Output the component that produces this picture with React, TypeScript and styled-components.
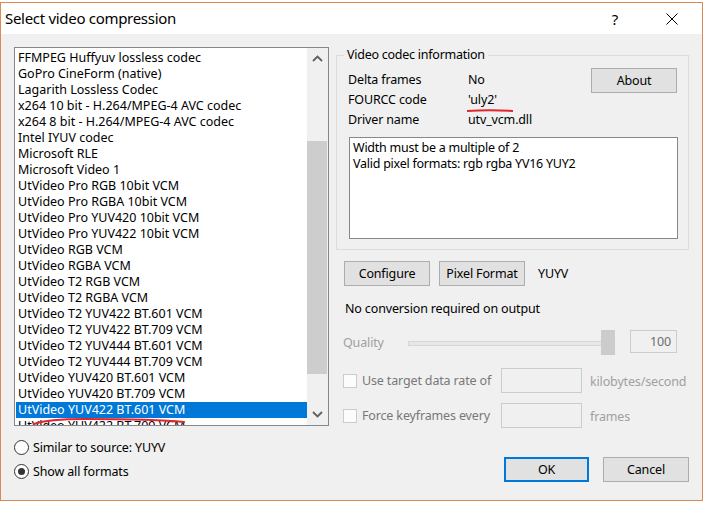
import React from "react";
import styled, { createGlobalStyle } from "styled-components";

const FONT = `"Noto Sans", "Open Sans", "Liberation Sans", sans-serif`;

const Global = createGlobalStyle`
  html, body { margin: 0; padding: 0; background: #ffffff; }
  body { font-family: ${FONT}; }
  * { box-sizing: border-box; }
`;

const Page = styled.div`
  width: 726px;
  height: 508px;
  padding-top: 2px;
`;

const Window = styled.div`
  width: 703px;
  height: 499px;
  border: 1px solid #d98a55;
  background: #f0f0f0;
  display: flex;
  flex-direction: column;
  font-family: ${FONT};
  font-size: 12px;
  color: #000;
  letter-spacing: -0.15px;
`;

const TitleBar = styled.div`
  height: 31px;
  flex: none;
  background: #ffffff;
  display: flex;
  align-items: center;
  padding: 0 7px 0 4px;
`;

const TitleText = styled.div`
  flex: 1;
  font-size: 15px;
  line-height: 20px;
  letter-spacing: -0.3px;
  margin-top: -1px;
`;

const TitleButton = styled.div<{ $gap?: number }>`
  width: 46px;
  height: 31px;
  display: flex;
  align-items: center;
  justify-content: center;
  font-size: 15px;
  margin-left: ${(p) => p.$gap ?? 0}px;
`;

const Body = styled.div`
  flex: 1;
  display: flex;
  gap: 7px;
  padding: 13px 13px 0 13px;
`;

const LeftCol = styled.div`
  width: 315px;
  display: flex;
  flex-direction: column;
`;

const ListBox = styled.div`
  position: relative;
  height: 379px;
  border: 1px solid #828790;
  background: #ffffff;
  display: flex;
  overflow: hidden;
`;

const Items = styled.div`
  width: 292px;
  padding: 2px 0 0 1px;
  overflow: hidden;
`;

const Item = styled.div<{ $selected?: boolean }>`
  height: 16px;
  line-height: 16px;
  padding-left: 2px;
  white-space: nowrap;
  font-size: 12.5px;
  letter-spacing: 0;
  background: ${(p) => (p.$selected ? "#0078d7" : "transparent")};
  color: ${(p) => (p.$selected ? "#ffffff" : "#000000")};
`;

const ScrollBar = styled.div`
  width: 21px;
  background: #f0f0f0;
  display: flex;
  flex-direction: column;
`;

const ScrollArrow = styled.div`
  height: 21px;
  flex: none;
  display: flex;
  align-items: center;
  justify-content: center;
  padding-right: 1px;
`;

const ScrollTrack = styled.div`
  flex: 1;
  padding-right: 1px;
`;

const ScrollThumb = styled.div`
  margin-top: 72px;
  height: 233px;
  background: #cdcdcd;
`;

const Annotation = styled.svg`
  position: absolute;
  left: 0;
  top: 0;
  pointer-events: none;
  overflow: visible;
`;

const RadioGroup = styled.div`
  margin-top: 9px;
  display: flex;
  flex-direction: column;
`;

const RadioRow = styled.div`
  height: 24px;
  display: flex;
  align-items: center;
  font-size: 12.5px;
`;

const RadioCircle = styled.div<{ $checked?: boolean }>`
  width: 15px;
  height: 15px;
  border-radius: 50%;
  border: 1px solid #333333;
  background: #ffffff;
  margin-right: 4px;
  display: flex;
  align-items: center;
  justify-content: center;
  &::after {
    content: "";
    width: 7px;
    height: 7px;
    border-radius: 50%;
    background: ${(p) => (p.$checked ? "#333333" : "transparent")};
  }
`;

const RightCol = styled.div`
  width: 353px;
  display: flex;
  flex-direction: column;
`;

const GroupBox = styled.div`
  position: relative;
  margin-top: 8px;
  border: 1px solid #dcdcdc;
  padding: 13px 10px 10px 11px;
`;

const Legend = styled.div`
  position: absolute;
  left: 7px;
  top: -9px;
  padding: 0 3px;
  background: #f0f0f0;
  line-height: 16px;
  font-size: 12.5px;
  letter-spacing: -0.25px;
`;

const InfoRow = styled.div`
  display: flex;
  align-items: flex-start;
  justify-content: space-between;
`;

const InfoGrid = styled.div`
  display: grid;
  grid-template-columns: 120px auto;
  grid-auto-rows: 20px;
  align-items: center;
  font-size: 12.5px;
`;

const InfoValue = styled.div`
  position: relative;
`;

const Button = styled.div<{ $w: number; $default?: boolean }>`
  width: ${(p) => p.$w}px;
  height: 25px;
  flex: none;
  background: #e1e1e1;
  border: ${(p) => (p.$default ? "2px solid #0078d7" : "1px solid #adadad")};
  display: flex;
  align-items: center;
  justify-content: center;
  font-size: 12.5px;
`;

const AboutButton = styled(Button)`
  margin-top: -1px;
  margin-right: 1px;
`;

const TextArea = styled.div`
  margin-top: 8px;
  margin-left: 1px;
  height: 102px;
  background: #ffffff;
  border: 1px solid #828790;
  padding: 2px 3px;
  line-height: 16px;
  font-size: 12.5px;
  letter-spacing: -0.25px;
`;

const ButtonsRow = styled.div`
  margin-top: 11px;
  padding-left: 8px;
  display: flex;
  align-items: center;
  gap: 9px;
  font-size: 12.5px;
`;

const FormatLabel = styled.span`
  margin-left: 4px;
`;

const StatusText = styled.div`
  margin-top: 15px;
  padding-left: 9px;
  line-height: 16px;
  font-size: 12.5px;
`;

const QualityRow = styled.div`
  margin-top: 13px;
  height: 25px;
  padding-left: 7px;
  display: flex;
  align-items: center;
`;

const DisabledLabel = styled.span<{ $w?: number }>`
  color: #a0a0a0;
  font-size: 12.5px;
  ${(p) => (p.$w ? `width: ${p.$w}px; flex: none;` : "")}
`;

const Slider = styled.div`
  width: 208px;
  height: 25px;
  flex: none;
  display: flex;
  align-items: center;
`;

const SliderTrack = styled.div`
  flex: 1;
  height: 5px;
  margin-top: 1px;
  border: 1px solid #d6d6d6;
  background: #e7e7e7;
`;

const SliderThumb = styled.div`
  width: 14px;
  height: 25px;
  background: #cccccc;
  margin-left: -14px;
  margin-right: 1px;
`;

const Edit = styled.div<{ $w: number; $h?: number }>`
  width: ${(p) => p.$w}px;
  height: ${(p) => p.$h ?? 25}px;
  flex: none;
  border: 1px solid #cccccc;
  background: #f0f0f0;
  display: flex;
  align-items: center;
  justify-content: flex-end;
  padding-right: 5px;
  color: #6d6d6d;
  font-size: 12.5px;
`;

const QualityEdit = styled(Edit)`
  margin-left: 14px;
  align-self: flex-start;
`;

const CheckRow = styled.div<{ $mt: number }>`
  margin-top: ${(p) => p.$mt}px;
  padding-left: 7px;
  height: 25px;
  display: flex;
  align-items: center;
`;

const CheckLabel = styled.label`
  width: 158px;
  flex: none;
  display: flex;
  align-items: center;
  color: #787878;
  font-size: 12.5px;
`;

const CheckBox = styled.span`
  width: 14px;
  height: 14px;
  border: 1px solid #cccccc;
  background: #fcfcfc;
  margin-right: 5px;
  flex: none;
`;

const Unit = styled(DisabledLabel)`
  margin-left: 8px;
  margin-top: 2px;
`;

const Footer = styled.div`
  margin-top: 29px;
  display: flex;
  justify-content: flex-end;
  gap: 14px;
`;

const codecs = [
  "FFMPEG Huffyuv lossless codec",
  "GoPro CineForm (native)",
  "Lagarith Lossless Codec",
  "x264 10 bit - H.264/MPEG-4 AVC codec",
  "x264 8 bit - H.264/MPEG-4 AVC codec",
  "Intel IYUV codec",
  "Microsoft RLE",
  "Microsoft Video 1",
  "UtVideo Pro RGB 10bit VCM",
  "UtVideo Pro RGBA 10bit VCM",
  "UtVideo Pro YUV420 10bit VCM",
  "UtVideo Pro YUV422 10bit VCM",
  "UtVideo RGB VCM",
  "UtVideo RGBA VCM",
  "UtVideo T2 RGB VCM",
  "UtVideo T2 RGBA VCM",
  "UtVideo T2 YUV422 BT.601 VCM",
  "UtVideo T2 YUV422 BT.709 VCM",
  "UtVideo T2 YUV444 BT.601 VCM",
  "UtVideo T2 YUV444 BT.709 VCM",
  "UtVideo YUV420 BT.601 VCM",
  "UtVideo YUV420 BT.709 VCM",
  "UtVideo YUV422 BT.601 VCM",
  "UtVideo YUV422 BT.709 VCM",
];

const Chevron = ({ up }: { up?: boolean }) => (
  <svg width="11" height="7" viewBox="0 0 11 7">
    <path
      d={up ? "M1 6 L5.5 1.5 L10 6" : "M1 1 L5.5 5.5 L10 1"}
      fill="none"
      stroke="#606060"
      strokeWidth="1.8"
    />
  </svg>
);

export default function App() {
  return (
    <Page>
      <Global />
      <Window>
        <TitleBar>
          <TitleText>Select video compression</TitleText>
          <TitleButton>?</TitleButton>
          <TitleButton $gap={11}>
            <svg width="12" height="12" viewBox="0 0 12 12">
              <path d="M0.5 0.5 L11.5 11.5 M11.5 0.5 L0.5 11.5" stroke="#000" strokeWidth="1" />
            </svg>
          </TitleButton>
        </TitleBar>
        <Body>
          <LeftCol>
            <ListBox>
              <Items>
                {codecs.map((c, i) => (
                  <Item key={c} $selected={i === 22}>
                    {c}
                  </Item>
                ))}
              </Items>
              <ScrollBar>
                <ScrollArrow>
                  <Chevron up />
                </ScrollArrow>
                <ScrollTrack>
                  <ScrollThumb />
                </ScrollTrack>
                <ScrollArrow>
                  <Chevron />
                </ScrollArrow>
              </ScrollBar>
              <Annotation width="315" height="379">
                <path
                  d="M19 376 C30 372 45 371 70 371 C110 371 150 372 169 374"
                  fill="none"
                  stroke="#e3262b"
                  strokeWidth="2"
                  strokeLinecap="round"
                />
              </Annotation>
            </ListBox>
            <RadioGroup>
              <RadioRow>
                <RadioCircle />
                Similar to source: YUYV
              </RadioRow>
              <RadioRow>
                <RadioCircle $checked />
                Show all formats
              </RadioRow>
            </RadioGroup>
          </LeftCol>
          <RightCol>
            <GroupBox>
              <Legend>Video codec information</Legend>
              <InfoRow>
                <InfoGrid>
                  <div>Delta frames</div>
                  <InfoValue>No</InfoValue>
                  <div>FOURCC code</div>
                  <InfoValue>
                    'uly2'
                    <Annotation width="48" height="4" style={{ top: 18, left: -2 }}>
                      <path d="M1 2 C15 1.2 32 1.2 47 2" fill="none" stroke="#e3262b" strokeWidth="2" />
                    </Annotation>
                  </InfoValue>
                  <div>Driver name</div>
                  <InfoValue>utv_vcm.dll</InfoValue>
                </InfoGrid>
                <AboutButton $w={86}>About</AboutButton>
              </InfoRow>
              <TextArea>
                Width must be a multiple of 2
                <br />
                Valid pixel formats: rgb rgba YV16 YUY2
              </TextArea>
            </GroupBox>
            <ButtonsRow>
              <Button $w={86}>Configure</Button>
              <Button $w={86}>Pixel Format</Button>
              <FormatLabel>YUYV</FormatLabel>
            </ButtonsRow>
            <StatusText>No conversion required on output</StatusText>
            <QualityRow>
              <DisabledLabel $w={65}>Quality</DisabledLabel>
              <Slider>
                <SliderTrack />
                <SliderThumb />
              </Slider>
              <QualityEdit $w={47} $h={23}>
                100
              </QualityEdit>
            </QualityRow>
            <CheckRow $mt={13}>
              <CheckLabel>
                <CheckBox />
                Use target data rate of
              </CheckLabel>
              <Edit $w={81} />
              <Unit>kilobytes/second</Unit>
            </CheckRow>
            <CheckRow $mt={10}>
              <CheckLabel>
                <CheckBox />
                Force keyframes every
              </CheckLabel>
              <Edit $w={81} />
              <Unit>frames</Unit>
            </CheckRow>
            <Footer>
              <Button $w={85} $default>
                OK
              </Button>
              <Button $w={86}>Cancel</Button>
            </Footer>
          </RightCol>
        </Body>
      </Window>
    </Page>
  );
}
